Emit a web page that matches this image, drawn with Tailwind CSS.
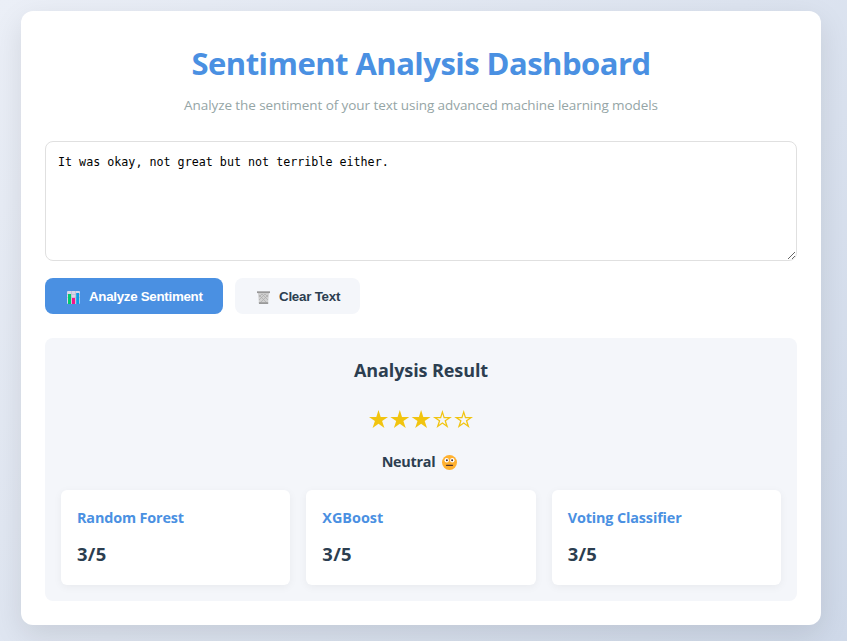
<!DOCTYPE html>
<html lang="en">
<head>
<meta charset="utf-8">
<title>Sentiment Analysis Dashboard</title>
<script src="https://cdn.jsdelivr.net/npm/@tailwindcss/browser@4"></script>
</head>
<body class="h-[641px] overflow-hidden bg-[linear-gradient(135deg,#ebeff7,#cfd9e9)] pt-[11px] pl-[21px] font-['Open_Sans','Noto_Sans',sans-serif] text-[#2c3e50]">
<main class="flex h-[614px] w-[800px] flex-col rounded-xl bg-white px-6 pt-[31px] shadow-[0_10px_30px_rgba(0,0,0,0.1)]">
  <header class="flex flex-col items-center whitespace-nowrap">
    <h1 class="h-[42px] text-[31px] leading-[42px] font-bold tracking-[-0.53px] text-[#4a90e2]">Sentiment Analysis Dashboard</h1>
    <p class="mt-[11px] h-5 text-[13.5px] leading-5 tracking-[-0.075px] text-[#95a5a6]">Analyze the sentiment of your text using advanced machine learning models</p>
  </header>
  <textarea class="mt-[26px] block h-[120px] w-full shrink-0 resize-y rounded-lg border border-[#e0e0e0] bg-white p-3 font-['DejaVu_Sans_Mono',monospace] text-[11.7px] leading-[17px] text-black" spellcheck="false">It was okay, not great but not terrible either.</textarea>
  <div class="mt-[17px] flex gap-3 font-['Liberation_Sans',sans-serif] text-[13.333px] font-bold">
    <button class="flex h-9 w-[178px] items-center rounded-lg bg-[#4a90e2] pl-[22px] text-white">
      <svg class="mt-[3px] mr-[9px] h-[13px] w-[13px]" viewBox="0 0 13 13"><rect width="13" height="13" rx="1" fill="#d8d5e8"/><path d="M0 3.5h13M0 6.5h13M4.5 0v13M8.5 0v13" stroke="#b9b5cf" stroke-width=".6"/><path d="M1 3h3v10H1z" fill="#00c96b"/><path d="M5 7h3v6H5z" fill="#f4148c"/><path d="M9.2 2h3v11h-3z" fill="#0c9be8"/></svg>
      <span class="pt-0.5 tracking-[-0.29px] whitespace-nowrap">Analyze Sentiment</span>
    </button>
    <button class="flex h-9 w-[125px] items-center rounded-lg bg-[#f4f6fa] pl-[22px]">
      <svg class="mt-[3px] mr-[9px] h-[13px] w-[13px]" viewBox="0 0 13 13"><path d="M1 2h11l-1 11H2z" fill="#d0d0d0"/><path d="M2 4l8 8M5 3l6 6M8 3l3 3M11 4l-8 8M8 3L2 9M5 3L2 6" stroke="#aaa" stroke-width=".7"/><path d="M0 .3h13v1.8H0z" fill="#989898"/><path d="M1.8 11.2h9.4V13H2z" fill="#999"/></svg>
      <span class="pt-0.5 tracking-[-0.23px] whitespace-nowrap">Clear Text</span>
    </button>
  </div>
  <section class="mt-6 flex h-[263px] flex-col items-center rounded-lg bg-[#f4f6fa] px-4 pt-5">
    <h2 class="h-6 text-[18px] leading-6 font-bold tracking-[-0.1px] whitespace-nowrap">Analysis Result</h2>
    <div class="mt-[27px] flex h-[22px] gap-[3px] pt-px" role="img" aria-label="3 of 5 stars">
      <svg class="h-[19px] w-[104px]" viewBox="0 0 104 19" fill="#f1c40f">
        <defs><path id="star" d="M9.5 0l2.2 6.9H19l-5.9 4.2 2.3 7-5.9-4.3-5.9 4.3 2.3-7L0 6.9h7.3z"/></defs>
        <use href="#star"/><use href="#star" x="21.3"/><use href="#star" x="42.6"/>
        <path id="hollow" fill-rule="evenodd" d="M73.4 0l2.2 6.9h7.3L77 11.1l2.3 7-5.9-4.3-5.9 4.3 2.3-7-5.9-4.2h7.3zM73.4 4l-1.3 4.2h-4.2l3.4 2.4-1.3 4.1 3.4-2.5 3.4 2.5-1.3-4.1 3.4-2.4h-4.2z"/><use href="#hollow" x="21.3"/>
      </svg>
    </div>
    <div class="mt-[19px] flex h-6 items-center gap-[7px] pr-[3px] text-[14.4px] leading-6 font-bold whitespace-nowrap">
      <span class="tracking-[-0.28px]">Neutral</span>
      <svg class="h-[15px] w-[15px]" viewBox="0 0 15 15"><circle cx="7.5" cy="7.5" r="7.5" fill="#ffb02e"/><circle cx="4.7" cy="5.3" r="2.2" fill="#fff"/><circle cx="10.3" cy="5.3" r="2.2" fill="#fff"/><circle cx="4.9" cy="5.3" r="1" fill="#402a32"/><circle cx="10.1" cy="5.3" r="1" fill="#402a32"/><path d="M4.5 10.3h6" stroke="#51312d" stroke-width="1.2" stroke-linecap="round"/></svg>
    </div>
    <div class="mt-4 grid w-full grid-cols-3 gap-4 whitespace-nowrap">
      <article class="h-[95px] rounded-md bg-white px-4 pt-4 shadow-[0_2px_8px_rgba(0,0,0,0.05)]">
        <h3 class="h-6 text-[14.4px] leading-6 font-bold tracking-[-0.15px] text-[#4a90e2]">Random Forest</h3>
        <p class="mt-[11px] text-[18.4px] leading-[26px] font-bold tracking-[0.3px]">3/5</p>
      </article>
      <article class="h-[95px] rounded-md bg-white px-4 pt-4 shadow-[0_2px_8px_rgba(0,0,0,0.05)]">
        <h3 class="h-6 text-[14.4px] leading-6 font-bold text-[#4a90e2]">XGBoost</h3>
        <p class="mt-[11px] text-[18.4px] leading-[26px] font-bold tracking-[0.3px]">3/5</p>
      </article>
      <article class="h-[95px] rounded-md bg-white px-4 pt-4 shadow-[0_2px_8px_rgba(0,0,0,0.05)]">
        <h3 class="h-6 text-[14.4px] leading-6 font-bold tracking-[-0.13px] text-[#4a90e2]">Voting Classifier</h3>
        <p class="mt-[11px] text-[18.4px] leading-[26px] font-bold tracking-[0.3px]">3/5</p>
      </article>
    </div>
  </section>
</main>
</body>
</html>
